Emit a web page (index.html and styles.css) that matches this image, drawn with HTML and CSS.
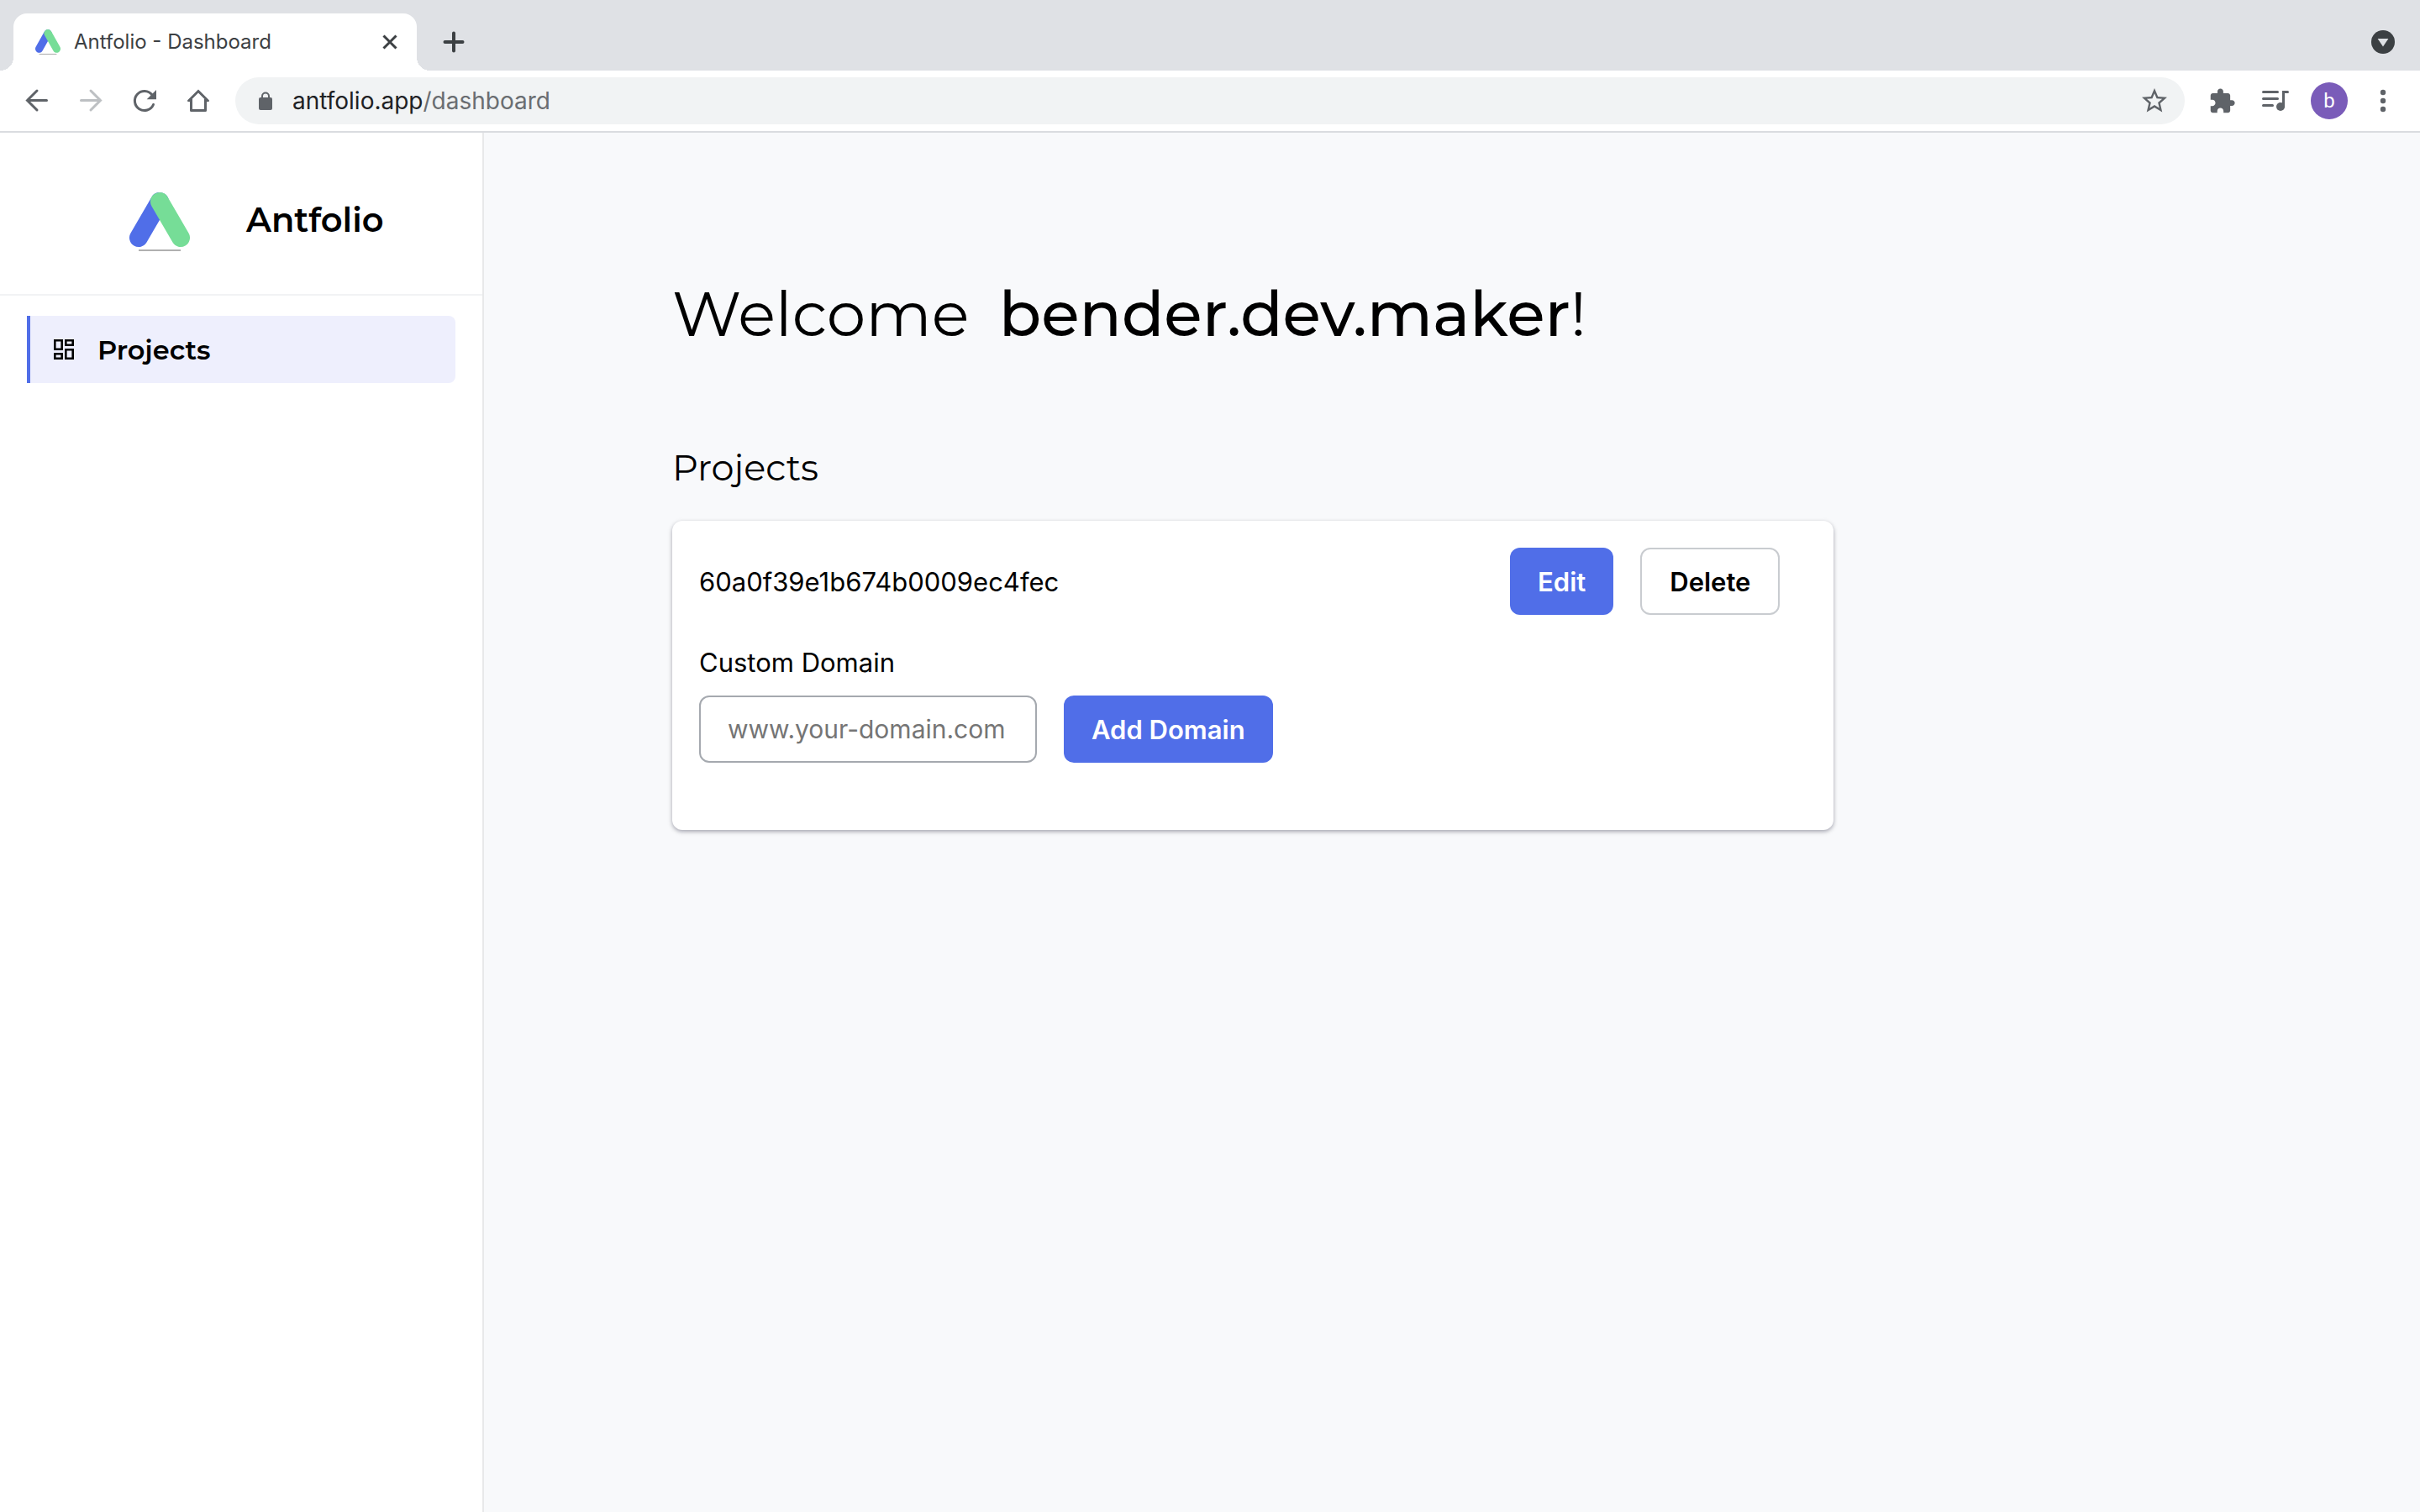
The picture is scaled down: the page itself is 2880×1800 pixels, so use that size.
FILE: index.html
```html
<!DOCTYPE html>
<html lang="en">
<head>
  <meta charset="utf-8">
  <meta name="viewport" content="width=device-width, initial-scale=1">
  <title>Antfolio - Dashboard</title>
  <link rel="stylesheet" href="styles.css">
</head>
<body>
  <header class="browser">
    <div class="tab-strip">
      <div class="tab">
        <svg class="tab-icon" viewBox="0 4 72 70" preserveAspectRatio="none" aria-hidden="true">
          <path d="M36 15 11 58" fill="none" stroke="#506ee8" stroke-width="22" stroke-linecap="round"/>
          <path d="M36 15 61 58" fill="none" stroke="#76dd97" stroke-width="22" stroke-linecap="round"/>
          <path d="M11 73h50" stroke="#b0b0b0" stroke-width="3"/>
        </svg>
        <span class="tab-title">Antfolio - Dashboard</span>
        <button class="tab-close" type="button" aria-label="Close tab">
          <svg width="24" height="24" viewBox="0 0 24 24" aria-hidden="true"><path d="m4.5 4.500 15 15m0-15-15 15" stroke="#3c4043" stroke-width="3"/></svg>
        </button>
      </div>
      <button class="strip-button" type="button" aria-label="New tab">
        <svg width="28" height="28" viewBox="0 0 28 28" aria-hidden="true"><path d="M14 3.500v21M3.500 14h21" stroke="#3c4043" stroke-width="4" stroke-linecap="round"/></svg>
      </button>
      <button class="strip-button strip-end" type="button" aria-label="Search tabs">
        <svg width="28" height="28" viewBox="0 0 28 28" aria-hidden="true"><circle cx="14" cy="14" r="14" fill="#3c4043"/><path d="M7.600 10h12.800L14 19.500z" fill="#dfe1e5"/></svg>
      </button>
    </div>

    <div class="toolbar">
      <button class="tool" type="button" aria-label="Back">
        <svg width="40" height="40" viewBox="0 0 40 40" aria-hidden="true"><path d="M20 8 8.500 19.500 20 31M8.500 19.500h23" fill="none" stroke="#5f6368" stroke-width="3" stroke-linecap="round"/></svg>
      </button>
      <button class="tool" type="button" aria-label="Forward">
        <svg width="40" height="40" viewBox="0 0 40 40" aria-hidden="true"><path d="m20 8 11.500 11.500L20 31m11.500-11.500h-23" fill="none" stroke="#bdc0c3" stroke-width="3" stroke-linecap="round"/></svg>
      </button>
      <button class="tool" type="button" aria-label="Reload">
        <svg width="40" height="40" viewBox="0 0 40 40" aria-hidden="true"><path d="M30.500 24.500A11.500 11.500 0 1 1 29 13" fill="none" stroke="#5f6368" stroke-width="3" stroke-linecap="round"/><path d="M34 7v11.300H22.700z" fill="#5f6368"/></svg>
      </button>
      <button class="tool" type="button" aria-label="Home">
        <svg width="40" height="40" viewBox="0 0 40 40" aria-hidden="true"><path d="M11.500 18v13.500h17V18" fill="none" stroke="#5f6368" stroke-width="3" stroke-linejoin="round"/><path d="M8 20.500 20 8.500l12 12" fill="none" stroke="#5f6368" stroke-width="3"/><path d="M7 20.500 11 17v4H7.500zM33 20.500 29 17v4h3.500z" fill="#5f6368"/></svg>
      </button>

      <div class="address">
        <svg width="24" height="28" viewBox="0 0 24 28" aria-hidden="true"><rect x="4" y="10" width="16" height="15" rx="2" fill="#5f6368"/><path d="M8 11V8.500a4 4 0 0 1 8 0V11" fill="none" stroke="#5f6368" stroke-width="2"/></svg>
        <span class="url"><span class="url-host">antfolio.app</span>/dashboard</span>
        <button class="bookmark" type="button" aria-label="Bookmark this page">
          <svg width="36" height="36" viewBox="0 0 24 24" aria-hidden="true"><path fill="#5f6368" d="m22 9.240-7.190-.620L12 2 9.190 8.630 2 9.240l5.460 4.730L5.820 21 12 17.270 18.180 21l-1.630-7.030L22 9.240zM12 15.400l-3.760 2.270 1-4.280-3.320-2.880 4.380-.380L12 6.100l1.710 4.040 4.380.380-3.320 2.880 1 4.280L12 15.400z"/></svg>
        </button>
      </div>

      <button class="tool" type="button" aria-label="Extensions">
        <svg width="33" height="33" viewBox="0 0 24 24" aria-hidden="true"><path fill="#5f6368" d="M20.500 11H19V7c0-1.100-.900-2-2-2h-4V3.500C13 2.120 11.880 1 10.500 1S8 2.120 8 3.500V5H4c-1.100 0-1.990.900-1.990 2v3.800H3.500c1.490 0 2.700 1.210 2.700 2.700s-1.210 2.700-2.700 2.700H2V20c0 1.100.900 2 2 2h3.800v-1.500c0-1.490 1.210-2.700 2.700-2.700s2.700 1.210 2.700 2.700V22H17c1.100 0 2-.900 2-2v-4h1.500c1.380 0 2.500-1.120 2.500-2.500S21.880 11 20.500 11z"/></svg>
      </button>
      <button class="tool" type="button" aria-label="Media controls">
        <svg width="40" height="40" viewBox="0 0 40 40" aria-hidden="true"><path d="M5.500 9.500h17M5.500 17.500h17M5.500 25.500h11M29.500 27V9.500h5" fill="none" stroke="#5f6368" stroke-width="3" stroke-linecap="round"/><circle cx="26" cy="27" r="5" fill="#5f6368"/></svg>
      </button>
      <button class="tool" type="button" aria-label="Profile"><span class="avatar">b</span></button>
      <button class="tool" type="button" aria-label="Menu">
        <svg width="40" height="40" viewBox="0 0 40 40" aria-hidden="true"><g fill="#5f6368"><circle cx="20" cy="10" r="3.200"/><circle cx="20" cy="20" r="3.200"/><circle cx="20" cy="30" r="3.200"/></g></svg>
      </button>
    </div>
  </header>

  <div class="app">
    <aside class="sidebar">
      <div class="brand">
        <svg width="72" height="74" viewBox="0 0 72 74" aria-hidden="true">
          <path d="M36 15 11 58" fill="none" stroke="#506ee8" stroke-width="22" stroke-linecap="round"/>
          <path d="M36 15 61 58" fill="none" stroke="#76dd97" stroke-width="22" stroke-linecap="round"/>
          <path d="M11 73h50" stroke="#b0b0b0" stroke-width="2"/>
        </svg>
        <span class="brand-name">Antfolio</span>
      </div>
      <nav class="nav">
        <a class="nav-link" href="#projects">
          <svg width="24" height="24" viewBox="0 0 24 24" aria-hidden="true"><path d="M1.300 1.300h8.400v10.400H1.300zM14.300 1.300h8.400v5.400h-8.400zM14.300 12.300h8.400v10.400h-8.400zM1.300 17.300h8.400v5.400H1.300z" fill="none" stroke="#000" stroke-width="2.600"/></svg>
          Projects
        </a>
      </nav>
    </aside>

    <main class="content">
      <h1 class="welcome">Welcome <strong class="user">bender.dev.maker</strong>!</h1>
      <h2 class="section-title" id="projects">Projects</h2>
      <section class="card">
        <div class="project">
          <span>60a0f39e1b674b0009ec4fec</span>
          <div class="actions">
            <button class="button primary" type="button">Edit</button>
            <button class="button outline" type="button">Delete</button>
          </div>
        </div>
        <form class="domain">
          <label class="domain-label" for="domain">Custom Domain</label>
          <div class="actions">
            <input class="domain-input" id="domain" type="text" placeholder="www.your-domain.com">
            <button class="button primary" type="button">Add Domain</button>
          </div>
        </form>
      </section>
    </main>
  </div>
</body>
</html>
```
FILE: styles.css
```css
* {
  box-sizing: border-box;
}

body {
  margin: 0;
  min-height: 100vh;
  display: flex;
  flex-direction: column;
  background: #f8f9fb;
  color: #000;
  font-family: Inter, Roboto, sans-serif;
}

button {
  border: 0;
  padding: 0;
  background: none;
  font: inherit;
  color: inherit;
  cursor: pointer;
}

svg {
  display: block;
  flex: none;
}

/* Browser frame */
.tab-strip {
  display: flex;
  height: 84px;
  padding: 16px 12px 0 16px;
  background: #dfe1e5;
}

.tab {
  position: relative;
  display: flex;
  align-items: center;
  gap: 16px;
  width: 480px;
  padding: 0 20px 0 26px;
  border-radius: 16px 16px 0 0;
  background: #fff;
}

.tab::before,
.tab::after {
  content: "";
  position: absolute;
  bottom: 0;
  width: 16px;
  height: 16px;
}

.tab::before {
  right: 100%;
  background: radial-gradient(circle at 0 0, transparent 16px, #fff 16px);
}

.tab::after {
  left: 100%;
  background: radial-gradient(circle at 100% 0, transparent 16px, #fff 16px);
}

.tab-icon {
  width: 30px;
  height: 30px;
}

.tab-title {
  flex: 1;
  color: #3c4043;
  font-size: 24px;
  line-height: 32px;
}

.strip-button {
  display: flex;
  align-items: center;
  justify-content: center;
  width: 64px;
  margin-left: 12px;
}

.strip-end {
  margin-left: auto;
}

.toolbar {
  display: flex;
  align-items: center;
  height: 74px;
  padding: 0 12px;
  border-bottom: 2px solid #dadce0;
  background: #fff;
}

.tool {
  display: flex;
  align-items: center;
  justify-content: center;
  width: 64px;
  height: 56px;
}

.address {
  flex: 1;
  display: flex;
  align-items: center;
  gap: 20px;
  height: 56px;
  margin: 0 12px;
  padding: 0 18px 0 24px;
  border-radius: 28px;
  background: #f1f3f4;
}

.url {
  flex: 1;
  color: #6a6d71;
  font-size: 28px;
  line-height: 40px;
}

.url-host {
  color: #202124;
}

.avatar {
  width: 44px;
  height: 44px;
  border-radius: 50%;
  background: #7a5cb9;
  color: #fff;
  font-family: Roboto, sans-serif;
  font-size: 24px;
  line-height: 44px;
}

/* App */
.app {
  flex: 1;
  display: flex;
}

.sidebar {
  flex: none;
  width: 20%;
  border-right: 2px solid #e8e9ea;
  background: #fff;
}

.brand {
  display: flex;
  align-items: center;
  gap: 67px;
  padding: 67px 32px 51px 154px;
  border-bottom: 2px solid #f2f3f4;
}

.brand-name {
  font-family: Montserrat, Inter, sans-serif;
  font-size: 40px;
  font-weight: 600;
  line-height: 48px;
}

.nav {
  padding: 24px 32px;
}

.nav-link {
  display: flex;
  align-items: center;
  gap: 28px;
  height: 80px;
  padding-left: 28px;
  border-left: 4px solid #506ee8;
  border-radius: 0 8px 8px 0;
  background: #eeeffd;
  color: #000;
  font-family: Montserrat, Inter, sans-serif;
  font-size: 32px;
  font-weight: 600;
  text-decoration: none;
}

.content {
  flex: 1;
  padding: 171px 0 64px 224px;
}

.welcome,
.section-title {
  margin: 0;
  font-family: Montserrat, Inter, sans-serif;
  font-weight: 400;
}

.welcome {
  margin-bottom: 111px;
  font-size: 74px;
  line-height: 90px;
}

.user {
  margin-left: 16px;
  font-weight: 500;
}

.section-title {
  margin-bottom: 36px;
  font-size: 43px;
  line-height: 54px;
}

.card {
  width: 48vw;
  padding: 32px 64px 80px 32px;
  border-radius: 12px;
  background: #fff;
  box-shadow: 0 2px 6px rgba(0, 0, 32, 0.16), 0 2px 4px rgba(0, 0, 32, 0.2);
  font-size: 31px;
}

.project {
  display: flex;
  align-items: center;
  justify-content: space-between;
  margin-bottom: 37px;
}

.actions {
  display: flex;
  gap: 32px;
}

.button {
  height: 80px;
  padding: 0 33px;
  border-radius: 12px;
  font-weight: 600;
}

.primary {
  background: #506ee8;
  color: #fff;
}

.outline {
  border: 2px solid #c9ccd0;
  background: #fff;
}

.domain-label {
  display: block;
  margin-bottom: 19px;
  line-height: 40px;
}

.domain-input {
  width: 402px;
  height: 80px;
  padding: 0 32px;
  border: 2px solid #a5a9af;
  border-radius: 12px;
  background: #fff;
  font: inherit;
  font-size: 30px;
}

.domain-input::placeholder {
  color: #757575;
}
```
